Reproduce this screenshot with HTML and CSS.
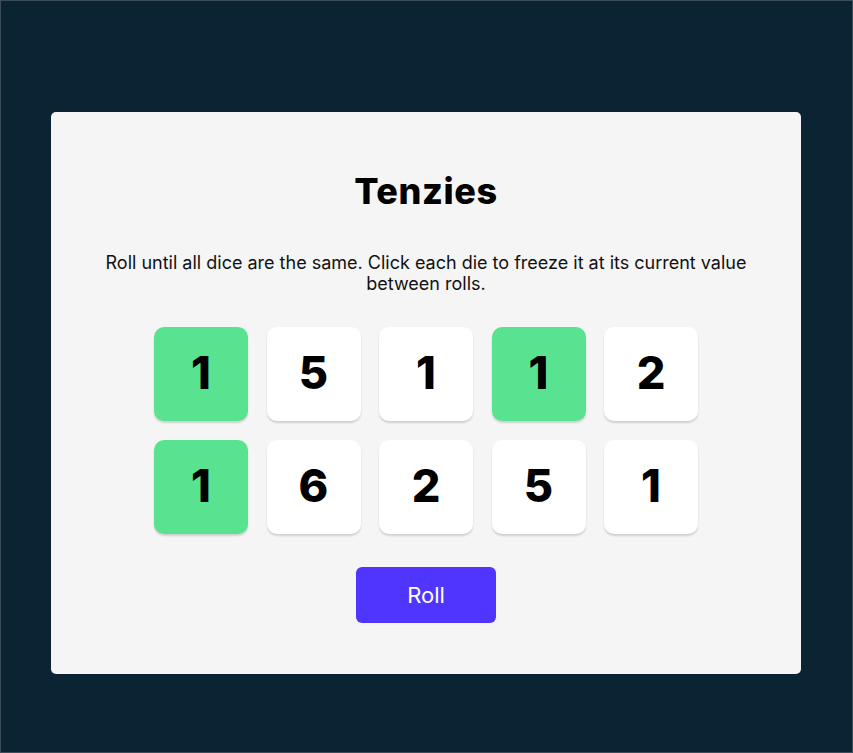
FILE: index.html
```html
<!DOCTYPE html>
<html lang="en">
<head>
<meta charset="utf-8">
<title>Tenzies</title>
<link rel="stylesheet" href="styles.css">
</head>
<body>
<div class="frame">
  <main class="card">
    <h1 class="title">Tenzies</h1>
    <p class="instructions">Roll until all dice are the same. Click each die to freeze it at its current value between rolls.</p>
    <div class="dice">
      <button class="die held">1</button>
      <button class="die">5</button>
      <button class="die">1</button>
      <button class="die held">1</button>
      <button class="die">2</button>
      <button class="die held">1</button>
      <button class="die">6</button>
      <button class="die">2</button>
      <button class="die">5</button>
      <button class="die">1</button>
    </div>
    <button class="roll">Roll</button>
  </main>
</div>
</body>
</html>
```

FILE: styles.css
```css
* { box-sizing: border-box; }
html, body { margin: 0; padding: 0; height: 100%; }
body {
  background: #0B2434;
  font-family: "Inter", "Liberation Sans", sans-serif;
}
.frame {
  height: 753px;
  border: 1px solid #3b4d5a;
  padding: 111px 51px 78px 50px;
}
.card {
  width: 750px;
  height: 562px;
  background: #F5F5F5;
  border-radius: 5px;
  display: flex;
  flex-direction: column;
  align-items: center;
  padding-top: 54px;
}
.title {
  margin: 0;
  font-size: 36px;
  font-weight: 800;
  line-height: 50px;
  color: #000;
  letter-spacing: 0.6px;
}
.instructions {
  margin: 36px 0 0;
  width: 680px;
  text-align: center;
  font-size: 18px;
  line-height: 21px;
  color: #111;
}
.dice {
  margin-top: 33px;
  display: grid;
  grid-template-columns: repeat(5, 94px);
  grid-auto-rows: 94px;
  column-gap: 18.5px;
  row-gap: 19px;
}
.die {
  border: none;
  border-radius: 10px;
  background: #FFFFFF;
  box-shadow: 0 2px 2px rgba(0, 0, 0, 0.15);
  font-family: "Inter", "Liberation Sans", sans-serif;
  font-size: 45px;
  font-weight: 800;
  color: #000;
  padding: 0 0 4px;
  display: flex;
  align-items: center;
  justify-content: center;
}
.die.held { background: #59E391; }
.roll {
  margin-top: 33px;
  width: 140px;
  height: 56px;
  border: none;
  border-radius: 6px;
  background: #5035FF;
  color: #fff;
  font-family: "Inter", "Liberation Sans", sans-serif;
  font-size: 22px;
  font-weight: 400;
}
```
